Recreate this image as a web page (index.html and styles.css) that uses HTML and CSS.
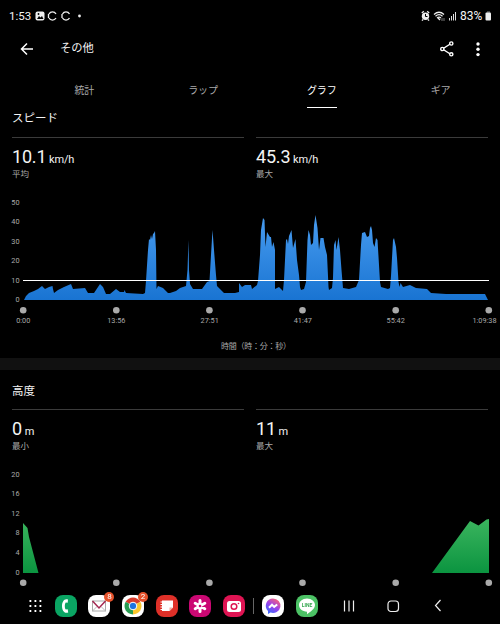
FILE: index.html
```
<!DOCTYPE html>
<html lang="ja">
<head>
    <meta charset="UTF-8">
    <meta name="viewport" content="width=device-width, initial-scale=1.0">
    <title>その他</title>
    <link rel="stylesheet" href="styles.css">
</head>
<body>
    <div class="status-bar">
        <span class="clock">1:53</span>
        <svg class="status-left" width="50" height="12" viewBox="0 0 50 12">
            <rect x="0.5" y="1.5" width="9" height="9" rx="2" fill="#eee"/>
            <path d="M2 9l2-3 1.5 1.5L7 6l1.500 3z" fill="#000"/>
            <circle cx="3.500" cy="4" r="0.900" fill="#000"/>
            <path d="M21 4A4 4 0 0 0 14 4M14 8A4 4 0 0 0 21 8M13.500 4v4M34.500 4A4 4 0 0 0 27.500 4M27.500 8A4 4 0 0 0 34.500 8M27 4v4" fill="none" stroke="#eee" stroke-width="1.300"/>
            <circle cx="44.500" cy="6" r="1.400" fill="#eee"/>
        </svg>
        <svg class="status-right" width="36" height="12" viewBox="0 0 36 12">
            <circle cx="4.500" cy="6.300" r="3.700" fill="#eee"/>
            <path d="M0.800 3l2-1.700M8.200 3L6.200 1.300M2 9.500L1 10.700M7 9.500l1 1.200" stroke="#eee" stroke-width="1.300"/>
            <path d="M4.500 4v2.500h2" fill="none" stroke="#000"/>
            <path d="M13 4.500Q18 0 23 4.500M14.500 6.300Q18 3 21.500 6.300M16 8Q18 6.300 20 8" fill="none" stroke="#eee" stroke-width="1.200"/>
            <path d="M17 8l2 2" stroke="#eee" stroke-width="1.500"/>
            <path d="M21 8v3M23 8v3" stroke="#777"/>
            <path d="M28.500 8v2.500M30.500 6v4.500M32.500 4v6.500M34.500 2v8.500" stroke="#ddd"/>
        </svg>
        <span class="percent">83%</span>
        <svg width="7" height="10" viewBox="0 0 7 10">
            <path d="M2 1h3" stroke="#888"/>
            <rect x="0.500" y="1.500" width="5.500" height="8" rx="1" fill="#eee"/>
        </svg>
    </div>

    <header class="app-bar">
        <svg width="14" height="14" viewBox="0 0 14 14" class="back">
            <path d="M13 7H2M7 1.500L1.500 7 7 12.500" fill="none" stroke="#fff" stroke-width="1.500"/>
        </svg>
        <h1>その他</h1>
        <svg width="14" height="16" viewBox="0 0 14 16">
            <path d="M11 2.500L2.500 8 11 13.500" fill="none" stroke="#fff" stroke-width="1.400"/>
            <g fill="#000" stroke="#fff" stroke-width="1.400">
                <circle cx="11.300" cy="2.500" r="1.600"/>
                <circle cx="2.300" cy="8" r="1.600"/>
                <circle cx="11.300" cy="13.300" r="1.600"/>
            </g>
        </svg>
        <svg width="4" height="16" viewBox="0 0 4 16" class="more" fill="#fff">
            <circle cx="2" cy="3" r="1.700"/>
            <circle cx="2" cy="8.300" r="1.700"/>
            <circle cx="2" cy="13.600" r="1.700"/>
        </svg>
    </header>

    <nav class="tabs">
        <a class="tab"><span>統計</span></a>
        <a class="tab"><span>ラップ</span></a>
        <a class="tab active"><span>グラフ</span></a>
        <a class="tab"><span>ギア</span></a>
    </nav>

    <section class="speed">
        <h2>スピード</h2>
        <div class="stats">
            <div class="stat">
                <div class="value">10.1 <small>km/h</small></div>
                <div class="label">平均</div>
            </div>
            <div class="stat">
                <div class="value">45.3 <small>km/h</small></div>
                <div class="label">最大</div>
            </div>
        </div>
        <svg class="chart" width="500" height="168" viewBox="0 0 500 168">
            <defs>
                <linearGradient id="blue" gradientUnits="userSpaceOnUse" x1="0" y1="25" x2="0" y2="110">
                    <stop offset="0" stop-color="#489cf0"/>
                    <stop offset="1" stop-color="#1974d2"/>
                </linearGradient>
            </defs>
            <g class="y-axis">
                <text x="19.500" y="14.500">50</text>
                <text x="19.500" y="34">40</text>
                <text x="19.500" y="53.500">30</text>
                <text x="19.500" y="73">20</text>
                <text x="19.500" y="92.500">10</text>
                <text x="19.500" y="112">0</text>
            </g>
            <path fill="url(#blue)" d="M24 110L26 106 29 103 34 101 38 99 42 96 45 99 49 97 52.500 96 53 99 54 103 58 100 64 97 71 94 73 99 85 98 88 103 94 103 100 94 103 97 106 104 110 104 116 99 120 102 124 102 124.500 100 126 103 143 104 145 103 146 91 148 60 149 49 150 50 151 45 152 49 153 44 154 43 155 41 156 60 156.500 99 158 96 163 98 168 103 170 103 176 101 180 98 186 96 187.500 80 188.500 50 189 80 190 94 193 99 202 99 207 92 209.500 91 211 65 212.500 40 214 60 216 85 217 96 224 103 235 103 239 102 239 93 242 97 245 95 251 95 252 99 257 95 258 91 260 65 261 40 263 28 264.500 30 265.500 57 267 42 270 47 271 47 272 57 273.500 52 275 60 275 99 279 97 283 101 284 90 286 50 287 49 288 54 289 46 291.500 40 293 58 295.500 49 297 70 299 85 300 97 301 100 304 99 306 92 307.500 50 308.500 40 310 45 311 55 313 53 314 35 315.500 25 317.500 38 319 60 320.500 48 323.500 48 325 57 327 65 328.500 97 329 100 332 98 333 88 334 55 335.500 50 336.500 60 338.500 47 340 60 341.500 80 343 98 349 99 356 97 359 90 361 55 362 43 365 42 367 47 369 46 370 38 371 36 372 40 373 53 374.500 57 376 48 377.500 50 379 75 380 92 381 97 388 99 390 98 391 86 393 50 394 48 396 57 397 68 398.500 92 399.500 97 400.500 93 403 97 410 95 416 98 427 99 431 103 446 104 485 104 488 110Z"/>
            <!-- average line -->
            <rect x="23" y="90" width="466" height="1" fill="#fff"/>
            <g class="dots">
                <circle cx="23.200" cy="120.300" r="3.300"/>
                <circle cx="116.300" cy="120.300" r="3.300"/>
                <circle cx="209.400" cy="120.300" r="3.300"/>
                <circle cx="302.500" cy="120.300" r="3.300"/>
                <circle cx="395.700" cy="120.300" r="3.300"/>
                <circle cx="488.800" cy="120.300" r="3.300"/>
            </g>
            <g class="x-axis">
                <text x="23.200" y="133">0:00</text>
                <text x="116.300" y="133">13:56</text>
                <text x="209.700" y="133">27:51</text>
                <text x="302.800" y="133">41:47</text>
                <text x="395.700" y="133">55:42</text>
                <text x="484.500" y="133">1:09:38</text>
                <text class="axis-title" x="221" y="159" textLength="70">時間（時：分：秒）</text>
            </g>
        </svg>
    </section>

    <section class="altitude">
        <h2>高度</h2>
        <div class="stats">
            <div class="stat">
                <div class="value">0 <small>m</small></div>
                <div class="label">最小</div>
            </div>
            <div class="stat">
                <div class="value">11 <small>m</small></div>
                <div class="label">最大</div>
            </div>
        </div>
        <svg class="chart" width="500" height="127" viewBox="0 0 500 127">
            <defs>
                <linearGradient id="green" gradientUnits="userSpaceOnUse" x1="0" y1="57" x2="0" y2="111">
                    <stop offset="0" stop-color="#3bb55e"/>
                    <stop offset="1" stop-color="#0b9440"/>
                </linearGradient>
            </defs>
            <g class="y-axis">
                <text x="19.500" y="14.500">20</text>
                <text x="19.500" y="34">16</text>
                <text x="19.500" y="53.500">12</text>
                <text x="19.500" y="73">8</text>
                <text x="19.500" y="92.500">4</text>
                <text x="19.500" y="112.500">0</text>
            </g>
            <path fill="url(#green)" d="M23 111V61L27.500 66 29 75 38.500 111ZM432 111L470 59 478.500 63.500 486.500 57.500 489 57V111Z"/>
            <g class="dots">
                <circle cx="23.200" cy="120.700" r="3.300"/>
                <circle cx="116.300" cy="120.700" r="3.300"/>
                <circle cx="209.400" cy="120.700" r="3.300"/>
                <circle cx="302.500" cy="120.700" r="3.300"/>
                <circle cx="395.700" cy="120.700" r="3.300"/>
                <circle cx="488.800" cy="120.700" r="3.300"/>
            </g>
        </svg>
    </section>

    <footer class="taskbar">
        <svg class="drawer" width="14" height="14" viewBox="0 0 14 14">
            <path d="M1.500 2h12M1.500 7h12M1.500 12h12" stroke="#fff" stroke-width="1.800" stroke-dasharray="1.800 3.200"/>
        </svg>
        <div class="app">
            <svg width="22" height="22" viewBox="0 0 22 22">
                <rect width="22" height="22" rx="8" fill="#0aa563"/>
                <path d="M13 4.500C9 3 7 7 7 11s2 8 6.200 6.500l-.5-3.200-2 .3C9.500 13 9.500 9 10.700 7.400l2 .3z" fill="#fff"/>
            </svg>
        </div>
        <div class="app">
            <svg width="22" height="22" viewBox="0 0 22 22">
                <rect width="22" height="22" rx="8" fill="#fff"/>
                <rect x="4.500" y="6" width="13" height="10" fill="#fff" stroke="#aaa"/>
                <path d="M4.500 16L9 11.500M17.500 16L13 11.500" stroke="#bbb"/>
                <path d="M4.500 6L11 13 17.500 6" fill="none" stroke="#a22750" stroke-width="1.500"/>
            </svg>
            <span class="badge">8</span>
        </div>
        <div class="app">
            <svg width="22" height="22" viewBox="0 0 22 22">
                <rect width="22" height="22" rx="8" fill="#fff"/>
                <path d="M11 11L3.650 6.750A8.500 8.500 0 0 1 18.350 6.750Z" fill="#d93b2b"/>
                <path d="M11 11L18.350 6.750A8.500 8.500 0 0 1 11 19.500Z" fill="#fbc62b"/>
                <path d="M11 11V19.500A8.500 8.500 0 0 1 3.650 6.750Z" fill="#269b50"/>
                <circle cx="11" cy="11" r="3.800" fill="#1e73e0" stroke="#fff"/>
            </svg>
            <span class="badge">2</span>
        </div>
        <div class="app">
            <svg width="22" height="22" viewBox="0 0 22 22">
                <rect width="22" height="22" rx="8" fill="#df3028"/>
                <path d="M6 5.500h11v7L13.500 16H6z" fill="#fff"/>
                <path d="M17 12.500h-3.500V16z" fill="#f3aaa0"/>
                <path d="M4.500 7h2M4.500 9.500h2M4.500 12h2M4.500 14.500h2" stroke="#fff"/>
            </svg>
        </div>
        <div class="app">
            <svg width="22" height="22" viewBox="0 0 22 22">
                <rect width="22" height="22" rx="8" fill="#cb0873"/>
                <path d="M11 5.500v11M6.200 8.200l9.600 5.600M6.200 13.800l9.600-5.600" stroke="#fff" stroke-width="3" stroke-linecap="round"/>
                <circle cx="11" cy="11" r="1.300" fill="#cb0873"/>
            </svg>
        </div>
        <div class="app">
            <svg width="22" height="22" viewBox="0 0 22 22">
                <rect width="22" height="22" rx="8" fill="#df1453"/>
                <rect x="4" y="6" width="14" height="11" rx="2.500" fill="#fff"/>
                <circle cx="11" cy="11.500" r="2.800" fill="#fff" stroke="#df1453" stroke-width="1.500"/>
                <circle cx="15.500" cy="8.500" r="0.800" fill="#df1453"/>
            </svg>
        </div>
        <div class="divider"></div>
        <div class="app">
            <svg width="22" height="22" viewBox="0 0 22 22">
                <defs>
                    <linearGradient id="messenger" x1="0.200" y1="1" x2="0.800" y2="0">
                        <stop offset="0" stop-color="#2f6bff"/>
                        <stop offset="0.500" stop-color="#9a42ec"/>
                        <stop offset="1" stop-color="#ff6670"/>
                    </linearGradient>
                </defs>
                <rect width="22" height="22" rx="8" fill="#fff"/>
                <path d="M11 3.500a7.500 7.200 0 1 1-2.500 14L6 19v-3A7.300 7.300 0 0 1 11 3.500z" fill="url(#messenger)"/>
                <path d="M7 12.700l3-3 2.200 2.200 3-2.400" fill="none" stroke="#fff" stroke-width="2"/>
            </svg>
        </div>
        <div class="app">
            <svg width="22" height="22" viewBox="0 0 22 22">
                <rect width="22" height="22" rx="8" fill="#4cc265"/>
                <path d="M11 3.500c4.600 0 8 3 8 6.600 0 3.700-4.500 6.700-8 9.200v-2.600c-4.600 0-8-3-8-6.600s3.400-6.600 8-6.600z" fill="#fff"/>
                <text class="line-name" x="11" y="12.200">LINE</text>
            </svg>
        </div>
        <svg class="recents" width="12" height="14" viewBox="0 0 12 14">
            <path d="M1.500 1.500v11M6 1.500v11M10.500 1.500v11" stroke="#eee" stroke-width="1.200"/>
        </svg>
        <svg class="home" width="13" height="13" viewBox="0 0 13 13">
            <rect x="1" y="1" width="10.500" height="10.500" rx="3" fill="none" stroke="#eee" stroke-width="1.200"/>
        </svg>
        <svg class="nav-back" width="8" height="14" viewBox="0 0 8 14">
            <path d="M6.500 1L1.500 6.500l5 5.500" fill="none" stroke="#eee" stroke-width="1.200"/>
        </svg>
    </footer>
</body>
</html>
```

FILE: styles.css
```
* {
    box-sizing: border-box;
}

body {
    margin: 0;
    width: 500px;
    height: 624px;
    overflow: hidden;
    display: flex;
    flex-direction: column;
    background-color: #000;
    color: #f4f4f4;
    font-family: Roboto, "Noto Sans CJK JP", sans-serif;
}

svg {
    display: block;
    flex: none;
}

h1,
h2 {
    margin: 0;
    font-weight: 400;
}

.status-bar {
    height: 30px;
    padding: 1px 8px 0 9px;
    display: flex;
    align-items: center;
    font-size: 11.5px;
}

.clock {
    width: 26px;
}

.status-right {
    margin-left: auto;
}

.percent {
    width: 24px;
    margin: 0 1px 0 3px;
    font-size: 12px;
}

.app-bar {
    height: 38px;
    padding: 0 20px;
    display: flex;
    align-items: center;
}

.app-bar h1 {
    margin-left: 26px;
    margin-right: auto;
    font-size: 11.3px;
    line-height: 18px;
}

.more {
    margin: 0 0 0 22px;
}

.tabs {
    height: 40px;
    padding-left: 25px;
    display: flex;
    justify-content: space-between;
}

.tab {
    width: 119px;
    padding-top: 14px;
    display: flex;
    justify-content: center;
    font-size: 10px;
    line-height: 18px;
    color: #aaa;
}

.tab.active {
    color: #fff;
}

.tab.active span {
    height: 26px;
    border-bottom: 1px solid #fff;
}

.speed {
    height: 250px;
}

.altitude {
    height: 231px;
    padding-top: 11px;
    border-top: 12px solid #111;
}

h2 {
    height: 29px;
    padding-left: 12px;
    font-size: 11.5px;
    line-height: 20px;
}

.altitude h2 {
    height: 28px;
}

.stats {
    height: 53px;
    padding: 0 12px;
    display: flex;
    gap: 12px;
}

.stat {
    flex: 1;
    border-top: 1px solid #3b3b3b;
    padding-top: 8px;
}

.value {
    height: 22px;
    font-size: 18px;
    line-height: 22px;
    letter-spacing: -0.2px;
    white-space: nowrap;
}

.value small {
    margin-left: -1.5px;
    font-size: 11px;
}

.label {
    font-size: 8.5px;
    line-height: 12px;
    color: #aaa;
}

.chart text {
    font-size: 7.3px;
    fill: #aaa;
}

.chart .y-axis text {
    text-anchor: end;
}

.chart .x-axis text {
    text-anchor: middle;
}

.chart .x-axis .axis-title {
    font-size: 8px;
    text-anchor: start;
}

.dots {
    fill: #aaa;
}

.taskbar {
    position: fixed;
    left: 0;
    bottom: 0;
    width: 500px;
    height: 36px;
    padding-left: 28px;
    display: flex;
    align-items: center;
}

.drawer {
    margin-right: 1px;
}

.app {
    position: relative;
    margin-left: 11.7px;
}

.badge {
    position: absolute;
    top: -3px;
    right: -4px;
    width: 10px;
    height: 10px;
    border-radius: 50%;
    background-color: #e5522b;
    color: #fff;
    font-size: 8px;
    line-height: 10px;
    text-align: center;
}

.divider {
    width: 1px;
    height: 16px;
    margin-left: 8px;
    margin-right: -4px;
    background-color: #666;
}

.line-name {
    font-size: 5px;
    font-weight: 700;
    text-anchor: middle;
    fill: #35a850;
}

.recents {
    margin-left: 25px;
}

.home {
    margin-left: 32px;
}

.nav-back {
    margin-left: 34px;
}
```
